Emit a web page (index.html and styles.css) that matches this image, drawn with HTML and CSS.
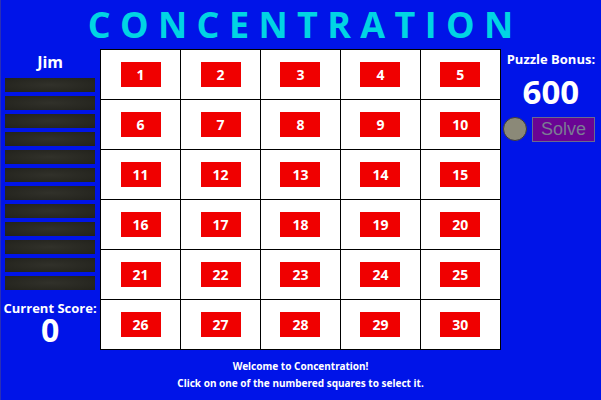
FILE: index.html
```html
<!DOCTYPE html>
<html lang="en">
<head>
<meta charset="utf-8">
<meta name="viewport" content="width=device-width, initial-scale=1">
<title>Concentration</title>
<link rel="stylesheet" href="styles.css">
</head>
<body>
<main class="game">
  <h1 class="title">C O N C E N T R A T I O N</h1>
  <div class="play">
    <section class="player">
      <h2 class="name">Jim</h2>
      <ul class="prizes" id="prizes"></ul>
      <p class="label">Current Score:</p>
      <p class="score">0</p>
    </section>
    <section class="board" id="board"></section>
    <section class="bonus">
      <p class="label">Puzzle Bonus:</p>
      <p class="amount">600</p>
      <div class="solve-row">
        <span class="lamp"></span>
        <button class="solve" type="button" disabled>Solve</button>
      </div>
    </section>
  </div>
  <div class="message">
    <p>Welcome to Concentration!</p>
    <p>Click on one of the numbered squares to select it.</p>
  </div>
</main>
<script src="script.js"></script>
</body>
</html>
```
FILE: styles.css
```css
* {
  box-sizing: border-box;
  margin: 0;
  padding: 0;
}

body {
  background: #0014e8;
  color: #fff;
  font-family: "Open Sans", sans-serif;
  font-weight: 700;
  overflow: hidden;
}

.game {
  min-height: 100vh;
  box-shadow: inset 1px 0 #2a2fb4;
}

.title {
  height: 49px;
  color: #00d4e4;
  font-size: 36px;
  line-height: 50px;
  text-align: center;
  white-space: nowrap;
}

.play {
  display: grid;
  grid-template-columns: 1fr 4fr 1fr;
}

.name {
  padding-top: 1px;
  font-size: 16px;
  line-height: 24px;
  text-align: center;
}

.prizes {
  display: grid;
  gap: 4px;
  margin: 4px 5px 10px;
  list-style: none;
}

.prize {
  height: 14px;
  background: radial-gradient(#31312a, #22221c);
}

.label {
  font-size: 13px;
  line-height: 16px;
  text-align: center;
  white-space: nowrap;
}

.score {
  font-size: 32px;
  line-height: 28px;
  text-align: center;
}

.board {
  display: grid;
  grid-template-columns: repeat(5, 1fr);
  gap: 1px;
  border: 1px solid #000;
  background: #000;
}

.square {
  display: grid;
  place-items: center;
  height: 49px;
  border: 0;
  background: #fff;
  color: #fff;
  font: inherit;
}

.number {
  width: 40px;
  background: #f00000;
  font-size: 14px;
  line-height: 25px;
}

.bonus {
  padding-top: 2px;
}

.amount {
  padding-top: 8px;
  font-size: 33px;
  line-height: 34px;
  text-align: center;
}

.solve-row {
  display: flex;
  align-items: center;
  gap: 5px;
  padding: 8px 6px 0 2px;
}

.lamp {
  flex: none;
  align-self: flex-start;
  width: 24px;
  height: 24px;
  border: 1px solid #3c3c3c;
  border-radius: 50%;
  background: #8b8978;
}

.solve {
  flex: 1;
  height: 25px;
  border: 1px solid #6a6a8e;
  background: #6a0494;
  color: #7b7b93;
  font: 18px "Liberation Sans", sans-serif;
}

.message {
  padding-top: 8px;
  font-family: "Noto Sans", sans-serif;
  font-size: 10px;
  line-height: 17px;
  text-align: center;
}
```
FILE: script.js
```js
const prizes = document.getElementById("prizes");
for (let i = 0; i < 12; i++) {
  const slot = document.createElement("li");
  slot.className = "prize";
  prizes.append(slot);
}

const board = document.getElementById("board");
for (let n = 1; n <= 30; n++) {
  const square = document.createElement("button");
  square.type = "button";
  square.className = "square";
  const number = document.createElement("span");
  number.className = "number";
  number.textContent = n;
  square.append(number);
  board.append(square);
}
```
